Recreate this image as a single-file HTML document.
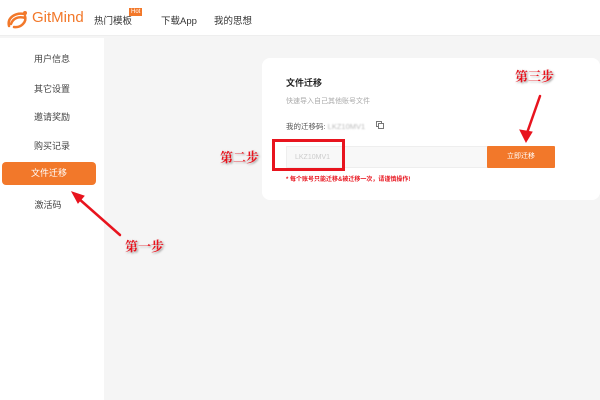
<!DOCTYPE html><html><head><meta charset="utf-8"><style>
*{margin:0;padding:0;box-sizing:border-box}
body{width:600px;height:400px;overflow:hidden;background:#f5f5f5;font-family:"Liberation Sans","Noto Sans CJK SC",sans-serif;position:relative;color:#333}
.a{position:absolute;white-space:nowrap}
.hdr{position:absolute;left:0;top:0;width:600px;height:36px;background:#fff;border-bottom:1px solid #eee}
.side{position:absolute;left:0;top:38px;width:104px;height:362px;background:#fff}
.si{position:absolute;left:0;width:104px;text-align:center;font-size:9px;color:#444}
.card{position:absolute;left:262px;top:58px;width:338px;height:142px;background:#fff;border-radius:8px}
.step{position:absolute;font-size:13px;font-weight:bold;color:#e8141e;text-shadow:0 0 2px #fff,1px 1px 2px #777;font-family:"Liberation Serif","Noto Serif CJK SC",serif}
</style></head><body>
<div class="hdr">
<svg class="a" style="left:5px;top:8px" width="26" height="22" viewBox="0 0 26 22"><path d="M4 18 C2 10 10 4 20 6 M6 16 C8 10 14 8 20 10 M9 19 C16 20 22 14 20 8" fill="none" stroke="#f2782a" stroke-width="2.5" stroke-linecap="round"/><circle cx="20" cy="5" r="2" fill="#f2782a"/></svg>
<div class="a" style="left:32px;top:9px;font-size:15px;color:#f2782a">GitMind</div>
<div class="a" style="left:94px;top:13px;font-size:9.5px">热门模板</div>
<div class="a" style="left:129px;top:8px;font-size:6px;background:#f2782a;color:#fff;padding:0 2px;line-height:8px">Hot</div>
<div class="a" style="left:161px;top:13px;font-size:9.5px">下载App</div>
<div class="a" style="left:214px;top:13px;font-size:9.5px">我的思想</div>
</div>
<div class="side">
<div class="si" style="top:14px">用户信息</div>
<div class="si" style="top:44px">其它设置</div>
<div class="si" style="top:72px">邀请奖励</div>
<div class="si" style="top:101px">购买记录</div>
<div class="a" style="left:2px;top:124px;width:94px;height:23px;background:#f2782a;border-radius:4px;color:#fff;font-size:9px;text-align:center;line-height:23px">文件迁移</div>
<div class="si" style="top:160px;left:-4px">激活码</div>
</div>
<div class="card">
<div class="a" style="left:24px;top:18px;font-size:9px;font-weight:bold;color:#222">文件迁移</div>
<div class="a" style="left:24px;top:38px;font-size:7px;color:#aaa">快速导入自己其他账号文件</div>
<div class="a" style="left:24px;top:63px;font-size:7.5px;color:#555">我的迁移码: <span style="color:#bbb;filter:blur(0.8px)">LKZ10MV1</span></div>
<div class="a" style="left:114px;top:63px;width:6px;height:6px;border:1px solid #777;background:#fff"></div>
<div class="a" style="left:116px;top:65px;width:6px;height:6px;border:1px solid #777;background:#fff"></div>
<div class="a" style="left:24px;top:88px;width:202px;height:22px;background:#f8f8f8;border:1px solid #eee;font-size:7px;color:#ccc;padding:7px 8px;filter:blur(.3px)">LKZ10MV1</div>
<div class="a" style="left:225px;top:88px;width:68px;height:22px;background:#f2782a;color:#fff;font-size:7px;text-align:center;line-height:22px;border-radius:1px">立即迁移</div>
<div class="a" style="left:24px;top:116px;font-size:6px;color:#e8141e;font-weight:bold">* 每个账号只能迁移&被迁移一次，请谨慎操作!</div>
</div>
<div class="a" style="left:272px;top:139px;width:73px;height:32px;border:3px solid #e8141e"></div>
<div class="step" style="left:220px;top:147px">第二步</div>
<div class="step" style="left:515px;top:66px">第三步</div>
<div class="step" style="left:125px;top:236px">第一步</div>
<svg class="a" style="left:0;top:0" width="600" height="400"><g stroke="#e8141e" stroke-width="2.5" fill="#e8141e" stroke-linecap="round"><line x1="540" y1="96" x2="527" y2="133"/><polygon points="520,130 526,142 532,132" stroke-width="1"/><line x1="120" y1="235" x2="78" y2="198"/><polygon points="72,192 84,196 78,203" stroke-width="1"/></g></svg>
</body></html>
